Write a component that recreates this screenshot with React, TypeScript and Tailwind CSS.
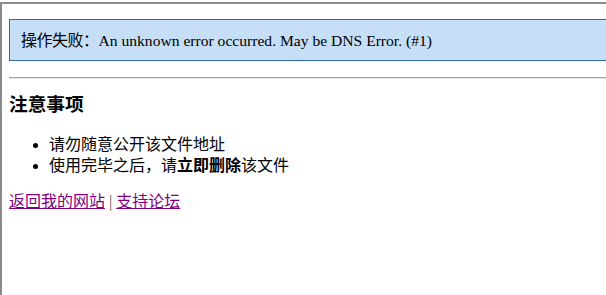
export default function App() {
  const font = { fontFamily: '"Liberation Serif", "Noto Sans CJK SC", serif' };
  return (
    <div className="w-[606px] h-[295px] overflow-hidden bg-white" style={font}>
      <div className="mt-[2px] h-[293px] border-t-2 border-l-2 border-[#8a8a8a] pl-[7px] text-black text-[16px] leading-[21px]">
        <div className="mt-[15px] w-[640px] h-[42px] border border-[#2f6ba3] bg-[#c6dff7] pl-[11px] flex items-center">
          <span className="tracking-[-0.5px]">操作失败：</span>
          <span className="text-[15.6px]">An unknown error occurred. May be DNS Error. (#1)</span>
        </div>
        <div className="mt-[16px] w-[640px] h-[2px] border-t border-[#a0a0a0] border-b border-b-[#e6e6e6]" />
        <h3 className="mt-[15px] text-[18.7px] leading-[22px] font-bold">注意事项</h3>
        <ul className="mt-[18px] pl-[40px] list-disc">
          <li>请勿随意公开该文件地址</li>
          <li>
            使用完毕之后，请<b className="font-bold">立即删除</b>该文件
          </li>
        </ul>
        <div className="mt-[15px]">
          <a href="#" className="text-[#800080] underline">返回我的网站</a>
          <span className="text-[#555]"> | </span>
          <a href="#" className="text-[#800080] underline">支持论坛</a>
        </div>
      </div>
    </div>
  );
}
